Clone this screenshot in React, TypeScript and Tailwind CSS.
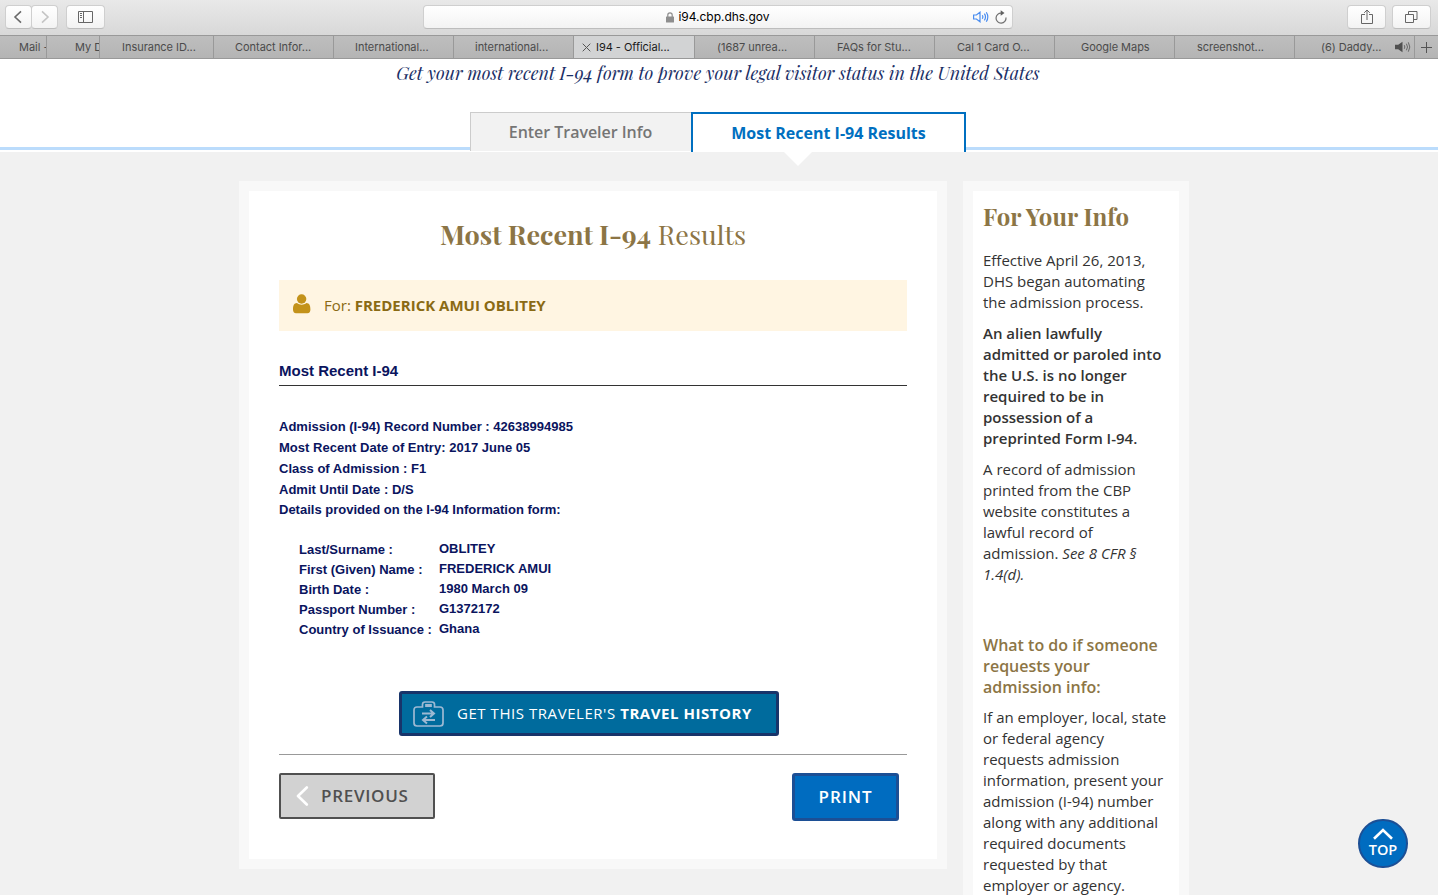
import React from 'react';

const toolBtn =
  'flex items-center justify-center h-[24px] rounded-[4px] border border-[#cfcfcf] border-b-[#bdbdbd] bg-gradient-to-b from-white to-[#f3f3f3] text-[#5a5a5a]';

type Tab = { label: string; box: string; active?: boolean; sound?: boolean };

const tabs: Tab[] = [
  { label: 'Mail -', box: 'w-[47px] pl-[19px]' },
  { label: 'My D', box: 'w-[53px] pl-[28px]' },
  { label: 'Insurance ID...', box: 'w-[114px] pl-[22px]' },
  { label: 'Contact Infor...', box: 'w-[120px] pl-[21px]' },
  { label: 'International...', box: 'w-[120px] pl-[21px]' },
  { label: 'international...', box: 'w-[120px] pl-[21px]' },
  { label: 'I94 - Official...', box: 'w-[121px] pl-[8px]', active: true },
  { label: '(1687 unrea...', box: 'w-[120px] pl-[22px]' },
  { label: 'FAQs for Stu...', box: 'w-[120px] pl-[22px]' },
  { label: 'Cal 1 Card O...', box: 'w-[120px] pl-[22px]' },
  { label: 'Google Maps', box: 'w-[120px] pl-[26px]' },
  { label: 'screenshot...', box: 'w-[120px] pl-[22px]' },
  { label: '(6) Daddy...', box: 'w-[120px] pl-[26px]', sound: true },
];

const records = [
  'Admission (I-94) Record Number : 42638994985',
  'Most Recent Date of Entry: 2017 June 05',
  'Class of Admission : F1',
  'Admit Until Date : D/S',
];

const details = [
  ['Last/Surname :', 'OBLITEY'],
  ['First (Given) Name :', 'FREDERICK AMUI'],
  ['Birth Date :', '1980 March 09'],
  ['Passport Number :', 'G1372172'],
  ['Country of Issuance :', 'Ghana'],
];

function Toolbar() {
  return (
    <div className="flex h-[35px] shrink-0 items-start bg-gradient-to-b from-[#e9e9e9] to-[#d8d8d8] pt-[5px]">
      <div className="ml-[5px] flex">
        <div className={`${toolBtn} w-[27px]`}>
          <svg className="-ml-[2px]" width="10" height="14" viewBox="0 0 10 14" fill="none" stroke="#6a6a6a" strokeWidth="1.6"><path d="M8 1.3 2 7l6 5.7" /></svg>
        </div>
        <div className={`${toolBtn} -ml-px w-[27px]`}>
          <svg width="10" height="14" viewBox="0 0 10 14" fill="none" stroke="#c4c4c4" strokeWidth="1.6"><path d="M2 1.3 8 7l-6 5.7" /></svg>
        </div>
      </div>
      <div className={`${toolBtn} ml-[8px] w-[39px]`}>
        <svg width="15" height="12" viewBox="0 0 15 12" fill="none" stroke="#666" strokeWidth="1"><path d="M.5.5h14v11H.5zM5.5.5v11M2 2.5h2M2 4.5h2M2 6.5h2" /></svg>
      </div>
      <div className={`${toolBtn} relative ml-[318px] w-[590px] gap-[4px]`}>
        <svg width="8" height="11" viewBox="0 0 8 11"><path d="M1.8 5V3a2.2 2.2 0 0 1 4.4 0v2" fill="none" stroke="#8e8e8e" strokeWidth="1.2" /><rect y="4.5" width="8" height="6" rx=".6" fill="#8e8e8e" /></svg>
        <span className="font-[Inter] text-[12px] leading-none tracking-[-0.03px] text-black">i94.cbp.dhs.gov</span>
        <div className="absolute right-[5px] top-[4px] flex items-center gap-[6px]">
          <svg width="16" height="12" viewBox="0 0 16 12" fill="none" stroke="#4a8df0" strokeWidth="1.2"><path d="M.6 4h2.8L7 1.2v9.6L3.4 8H.6z" /><path d="M9.3 4.2q1.1 1.8 0 3.6M11.4 2.7q2.2 3.3 0 6.6M13.3 1.3q3 4.7 0 9.4" /></svg>
          <svg width="12" height="14" viewBox="0 0 12 14" fill="none" stroke="#707070" strokeWidth="1.2"><path d="M6.5 3.1A5 5 0 1 0 11 7.5" /><path d="M5.7.2 9.5 3 5.7 5.8z" fill="#606060" stroke="none" /></svg>
        </div>
      </div>
      <div className={`${toolBtn} ml-[334px] w-[39px]`}>
        <svg width="12" height="16" viewBox="0 0 12 16" fill="none" stroke="#666" strokeWidth="1"><path d="M4 5.5H.5v9h11v-9H8M6 11V1M3.2 3.8 6 1l2.8 2.8" /></svg>
      </div>
      <div className={`${toolBtn} ml-[6px] w-[39px]`}>
        <svg width="13" height="12" viewBox="0 0 13 12" fill="none" stroke="#666" strokeWidth="1"><path d="M.5 3.5h8v8h-8zM3.5 3.5v-3h8.5v8H8.5" /></svg>
      </div>
    </div>
  );
}

function TabStrip() {
  return (
    <div className="flex h-[24px] shrink-0 border-y border-[#999] bg-gradient-to-b from-[#bebebe] to-[#b4b4b4] font-[Inter] text-[11px] leading-none tracking-[-0.03px] text-[#4b4b4b]">
      {tabs.map((t) => (
        <div
          key={t.label}
          className={`flex shrink-0 items-center overflow-hidden whitespace-nowrap border-r border-[#999] ${t.box} ${t.active ? 'bg-[#d2d3d4] text-[#1a1a1a]' : ''}`}
        >
          {t.active && (
            <svg className="mr-[5px] shrink-0" width="9" height="9" viewBox="0 0 9 9" stroke="#555" strokeWidth="1"><path d="m.7.7 7.6 7.6M8.3.7.7 8.3" /></svg>
          )}
          <span>{t.label}</span>
          {t.sound && (
            <svg className="ml-auto mr-[3px] shrink-0" width="16" height="12" viewBox="0 0 16 12" fill="none" stroke="#666"><path d="M0 3.8h3.2L7.5.8v10.4L3.2 8.2H0z" fill="#505050" stroke="none" /><path d="M9.3 4.2q1.1 1.8 0 3.6M11.4 2.7q2.2 3.3 0 6.6M13.3 1.3q3 4.7 0 9.4" /></svg>
          )}
        </div>
      ))}
      <div className="flex flex-1 items-center justify-center">
        <svg width="11" height="11" viewBox="0 0 11 11" stroke="#555"><path d="M5.5 0v11M0 5.5h11" /></svg>
      </div>
    </div>
  );
}

export default function App() {
  return (
    <div className="flex h-[895px] w-[1438px] flex-col overflow-hidden bg-[#f1f1f1] font-['Open_Sans',sans-serif]">
      <Toolbar />
      <TabStrip />

      <header className="flex h-[93px] shrink-0 flex-col bg-white">
        <p className="h-[53px] whitespace-nowrap pr-[2px] text-center font-['Playfair_Display','Liberation_Serif',serif] text-[18px] italic leading-[28px] text-[#1b2f66]">
          Get your most recent I-94 form to prove your legal visitor status in the United States
        </p>
        <div className="flex h-[40px]">
          <div className="flex w-[470px] flex-col justify-end pb-[2px]"><div className="h-[3px] bg-[#bbdcfc]" /></div>
          <div className="flex h-[39px] w-[221px] items-center justify-center border-l border-t border-[#ccc] bg-[#f2f2f2] pr-px text-[16px] font-semibold tracking-[-0.03px] text-[#757575]">
            Enter Traveler Info
          </div>
          <div className="relative flex h-[40px] w-[275px] items-center justify-center border-2 border-b-0 border-[#006fc0] bg-white text-[16px] font-bold text-[#006fc0]">
            Most Recent I-94 Results
            <svg className="absolute left-[91px] top-[38px]" width="28" height="14" viewBox="0 0 28 14"><path d="M0 0h28L14 14z" fill="#fff" /></svg>
          </div>
          <div className="flex flex-1 flex-col justify-end pb-[2px]"><div className="h-[3px] bg-[#bbdcfc]" /></div>
        </div>
      </header>

      <div className="flex items-start gap-[16px] pl-[239px] pt-[29px]">
        <main className="h-[688px] w-[708px] border-[10px] border-[#f8f8f8] bg-white px-[30px]">
          <h1 className="mt-[24px] h-[65px] whitespace-nowrap text-center font-['Playfair_Display','Liberation_Serif',serif] text-[27px] leading-[39px] text-[#8c7545]">
            <strong className="font-bold">Most Recent I-94</strong> Results
          </h1>
          <div className="flex h-[51px] items-center bg-[#fff5e2] pl-[14px] text-[15px] text-[#8a6a14]">
            <svg className="-mt-[4px] mr-[13px]" width="18" height="20" viewBox="0 0 18 20" fill="#c3921a"><circle cx="8.6" cy="5" r="4.7" /><path d="M4 9C1 9.200 0 11.400 0 15.500c0 2.200 1 3.700 3 3.700h11.400c2 0 3-1.500 3-3.700 0-4.100-1-6.300-4-6.500-2.800 2.300-6.600 2.300-9.400 0z" /></svg>
            <p>For: <strong className="font-bold">FREDERICK AMUI OBLITEY</strong></p>
          </div>
          <h2 className="mt-[30px] h-[25px] border-b border-[#333] font-['Liberation_Sans',sans-serif] text-[15px] font-bold leading-[20px] text-[#0a145e]">
            Most Recent I-94
          </h2>
          <div className="mt-[30px] font-['Liberation_Sans',sans-serif] text-[13px] font-bold text-[#0a145e]">
            {records.map((r) => <p key={r} className="h-[21px] leading-[21px] tracking-[0.015px]">{r}</p>)}
            <p className="leading-[20px]">Details provided on the I-94 Information form:</p>
            <dl className="mt-[19px] pl-[20px]">
              {details.map(([k, v]) => (
                <div key={k} className="flex h-[20px] leading-[20px]">
                  <dt className="w-[140px] pt-px">{k}</dt>
                  <dd>{v}</dd>
                </div>
              ))}
            </dl>
          </div>
          <button className="ml-[120px] mt-[52px] flex h-[45px] w-[380px] items-center whitespace-nowrap rounded-[3px] border-[3px] border-[#18346a] bg-[#006b9d] pl-[11px] text-[15px] tracking-[0.55px] text-white">
            <svg className="mr-[13px]" width="31" height="26" viewBox="0 0 31 26" fill="none" stroke="#9db9d3" strokeWidth="1.7"><path d="M9.5 6H4Q1 6 1 9v13q0 3 3 3h23q3 0 3-3V9q0-3-3-3h-5.500V3.500Q21.500 1 19 1h-7Q9.500 1 9.500 3.500z" /><rect x="13" y="3.800" width="5" height="1.400" /><path strokeWidth="2" d="M9 12.500h12M17 9l4 3.500-4 3.500M22 19H10.500M14 15.500l-4 3.500 4 3.500" /></svg>
            <span>GET THIS TRAVELER'S <strong className="font-bold">TRAVEL HISTORY</strong></span>
          </button>
          <div className="mt-[18px] flex justify-between border-t border-[#999] pr-[8px] pt-[18px]">
            <button className="flex h-[46px] w-[156px] items-center rounded-[2px] border-2 border-[#505050] bg-[#d2d2d2] pl-[15px] text-[17px] font-semibold tracking-[0.7px] text-[#505050]">
              <svg className="mr-[12px]" width="13" height="20" viewBox="0 0 13 20" fill="none" stroke="#fff" strokeWidth="2.6" strokeLinecap="round" strokeLinejoin="round"><path d="M10.800 1.500 2 10l8.800 8.500" /></svg>
              PREVIOUS
            </button>
            <button className="h-[48px] w-[107px] rounded-[3px] border-[3px] border-[#1c4f95] bg-[#006cc0] text-[17px] font-semibold tracking-[0.9px] text-white">PRINT</button>
          </div>
        </main>

        <aside className="h-[760px] w-[226px] border-[10px] border-[#f8f8f8] bg-white pl-[10px] text-[15px] leading-[21px] text-[#333]">
          <h2 className="mt-[9px] whitespace-nowrap font-['Playfair_Display','Liberation_Serif',serif] text-[24px] font-bold leading-[32px] tracking-[0.05px] text-[#8c7545]">For Your Info</h2>
          <p className="mt-[18px] whitespace-nowrap">Effective April 26, 2013,<br />DHS began automating<br />the admission process.</p>
          <p className="mt-[10px] whitespace-nowrap font-semibold">An alien lawfully<br />admitted or paroled into<br />the U.S. is no longer<br />required to be in<br />possession of a<br />preprinted Form I-94.</p>
          <p className="mt-[10px] whitespace-nowrap">A record of admission<br />printed from the CBP<br />website constitutes a<br />lawful record of<br />admission. <em>See 8 CFR §<br />1.4(d).</em></p>
          <h3 className="mt-[50px] whitespace-nowrap text-[16px] font-semibold text-[#8c7545]">What to do if someone<br />requests your<br />admission info:</h3>
          <p className="mt-[9px] whitespace-nowrap">If an employer, local, state<br />or federal agency<br />requests admission<br />information, present your<br />admission (I-94) number<br />along with any additional<br />required documents<br />requested by that<br />employer or agency.</p>
        </aside>
      </div>

      <button className="fixed left-[1358px] top-[819px] flex h-[49px] w-[50px] flex-col items-center rounded-full border-2 border-[#1c4f95] bg-[#006cc0] pt-[7px] text-[14.5px] font-semibold leading-[19px] text-white">
        <svg width="20" height="12" viewBox="0 0 20 12" fill="none" stroke="#fff" strokeWidth="2.6"><path d="M1 10.800 10 2l9 8.800" /></svg>
        TOP
      </button>
    </div>
  );
}
